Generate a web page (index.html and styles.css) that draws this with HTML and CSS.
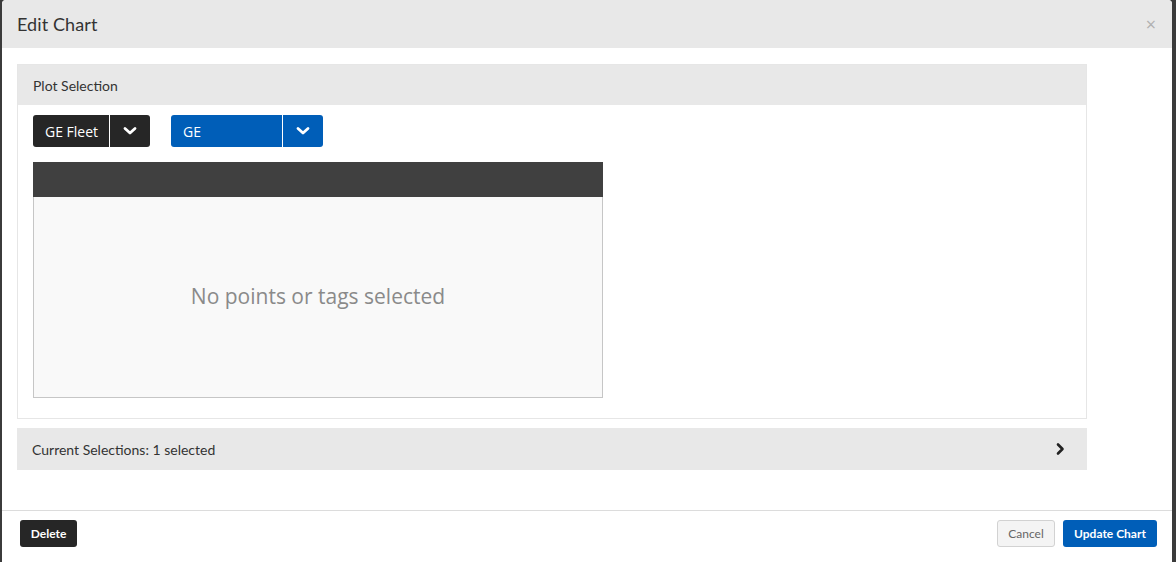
FILE: index.html
```html
<!DOCTYPE html>
<html>
<head>
<meta charset="utf-8">
<link rel="stylesheet" href="styles.css">
</head>
<body>
<div class="dialog">
  <div class="dlg-header">
    <h1 class="dlg-title">Edit Chart</h1>
    <span class="dlg-close">×</span>
  </div>
  <div class="dlg-body">
    <div class="panel">
      <div class="panel-head">Plot Selection</div>
      <div class="panel-body">
        <div class="btn-row">
          <div class="split dark">
            <span class="split-label">GE Fleet</span>
            <span class="split-caret"><svg width="14" height="10" viewBox="0 0 14 10"><path d="M2 2.5 L7 7 L12 2.5" fill="none" stroke="#fff" stroke-width="2.8" stroke-linecap="round" stroke-linejoin="round"/></svg></span>
          </div>
          <div class="split blue">
            <span class="split-label wide">GE</span>
            <span class="split-caret"><svg width="14" height="10" viewBox="0 0 14 10"><path d="M2 2.5 L7 7 L12 2.5" fill="none" stroke="#fff" stroke-width="2.8" stroke-linecap="round" stroke-linejoin="round"/></svg></span>
          </div>
        </div>
        <div class="chartbox">
          <div class="chartbox-head"></div>
          <div class="chartbox-body">No points or tags selected</div>
        </div>
      </div>
    </div>
    <div class="accordion">
      <span>Current Selections: 1 selected</span>
      <svg width="10" height="14" viewBox="0 0 10 14"><path d="M3 2.5 L7.5 7 L3 11.5" fill="none" stroke="#222" stroke-width="2.6" stroke-linecap="round" stroke-linejoin="round"/></svg>
    </div>
  </div>
  <div class="dlg-footer">
    <button class="btn btn-dark">Delete</button>
    <div class="footer-right">
      <button class="btn btn-light">Cancel</button>
      <button class="btn btn-blue">Update Chart</button>
    </div>
  </div>
</div>
</body>
</html>
```
FILE: styles.css
```css
html, body {
  margin: 0;
  padding: 0;
  height: 100%;
  overflow: hidden;
}
body {
  background: #3b3b3b;
  font-family: "Open Sans", "Liberation Sans", sans-serif;
  color: #333;
}
.dialog {
  margin-left: 2px;
  width: 1170px;
  height: 600px;
  background: #fff;
  border-radius: 4px 4px 0 0;
  overflow: hidden;
}
.dlg-header {
  height: 48px;
  background: #e8e8e8;
  display: flex;
  align-items: center;
  justify-content: space-between;
  padding: 0 15px;
}
.dlg-title {
  margin: 0;
  font-family: "Lato", "Open Sans", sans-serif;
  font-weight: 400;
  font-size: 18px;
  color: #333;
  letter-spacing: 0.1px;
}
.dlg-close {
  font-size: 18px;
  color: #b0b0b0;
  line-height: 1;
  margin-right: 1px;
}
.dlg-body {
  padding: 16px 15px 0;
  height: 446px;
  box-sizing: border-box;
}
.panel {
  width: 1070px;
  border: 1px solid #e6e6e6;
  box-sizing: border-box;
}
.panel-head {
  height: 40px;
  background: #e8e8e8;
  display: flex;
  align-items: center;
  padding-left: 15px;
  font-family: "Lato", "Open Sans", sans-serif;
  font-size: 14px;
  color: #333;
}
.panel-body {
  padding: 10px 15px 20px;
}
.btn-row {
  display: flex;
  gap: 20px;
}
.split {
  display: flex;
  height: 32px;
  border-radius: 3px;
  overflow: hidden;
  color: #fff;
  font-size: 14px;
  flex-shrink: 0;
}
.split.dark { background: #262626; }
.split.blue { background: #005eb8; margin-left: 1px; }
.split-label {
  display: flex;
  align-items: center;
  padding: 0 0 0 12px;
  width: 77px;
  box-sizing: border-box;
  border-right: 1px solid #fff;
  white-space: nowrap;
  flex-shrink: 0;
}
.split-label.wide {
  width: 112px;
}
.split-caret {
  width: 40px;
  display: flex;
  align-items: center;
  justify-content: center;
}
.chartbox {
  margin-top: 15px;
  width: 570px;
}
.chartbox-head {
  height: 35px;
  background: #404040;
}
.chartbox-body {
  height: 201px;
  background: #f9f9f9;
  border: 1px solid #c6c6c6;
  border-top: none;
  box-sizing: border-box;
  display: flex;
  align-items: center;
  justify-content: center;
  font-size: 21px;
  color: #8a8a8a;
  padding-bottom: 2px;
}
.accordion {
  margin-top: 9px;
  width: 1070px;
  height: 42px;
  background: #e8e8e8;
  display: flex;
  align-items: center;
  justify-content: space-between;
  padding: 0 22px 0 15px;
  box-sizing: border-box;
  font-family: "Lato", "Open Sans", sans-serif;
  font-size: 14px;
  color: #333;
}
.dlg-footer {
  border-top: 1px solid #dcdcdc;
  height: 50px;
  display: flex;
  align-items: flex-start;
  justify-content: space-between;
  padding: 9px 15px 0 18px;
  margin-top: 16px;
}
.footer-right {
  display: flex;
  gap: 8px;
}
.btn {
  height: 27px;
  border-radius: 3px;
  font-family: "Lato", "Open Sans", sans-serif;
  font-size: 12px;
  padding: 0;
  border: 1px solid transparent;
  cursor: pointer;
  white-space: nowrap;
  text-align: center;
}
.btn-dark {
  background: #262626;
  color: #fff;
  font-weight: 700;
  width: 57px;
}
.btn-light {
  background: #f4f4f4;
  border-color: #d2d2d2;
  color: #666;
  width: 58px;
}
.btn-blue {
  background: #005eb8;
  color: #fff;
  font-weight: 700;
  width: 94px;
}
```
